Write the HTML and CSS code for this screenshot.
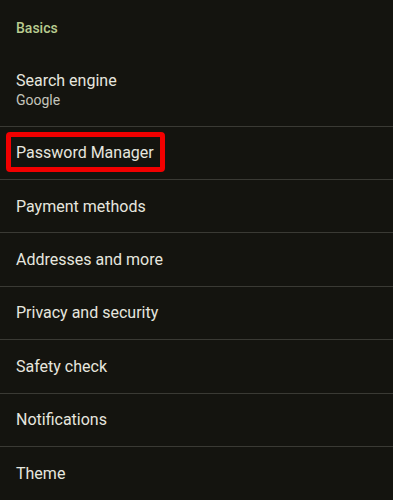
FILE: index.html
```html
<!DOCTYPE html>
<html>
<head>
<meta charset="utf-8">
<link rel="stylesheet" href="styles.css">
</head>
<body>
<div class="settings">
  <div class="section-header">Basics</div>
  <div class="row row-two">
    <div class="title">Search engine</div>
    <div class="subtitle">Google</div>
  </div>
  <div class="row row-divided row-highlight">
    <div class="title">Password Manager</div>
    <div class="highlight-box"></div>
  </div>
  <div class="row row-divided"><div class="title">Payment methods</div></div>
  <div class="row row-divided"><div class="title">Addresses and more</div></div>
  <div class="row row-divided"><div class="title">Privacy and security</div></div>
  <div class="row row-divided"><div class="title">Safety check</div></div>
  <div class="row row-divided"><div class="title">Notifications</div></div>
  <div class="row row-divided"><div class="title">Theme</div></div>
</div>
</body>
</html>
```
FILE: styles.css
```css
html, body {
  margin: 0;
  padding: 0;
  background: #14140f;
}
body {
  font-family: Roboto, "Noto Sans", Arial, sans-serif;
  color: #e4e4dc;
  width: 393px;
  height: 500px;
  overflow: hidden;
}
.settings {
  display: flex;
  flex-direction: column;
}
.section-header {
  height: 52px;
  box-sizing: border-box;
  padding: 18px 16px 0;
  font-size: 14px;
  line-height: 20px;
  font-weight: 500;
  color: #b9cc8f;
}
.row {
  display: flex;
  flex-direction: column;
  justify-content: center;
  padding: 1px 16px 0;
  box-sizing: border-box;
  height: 53.4px;
  flex-shrink: 0;
}
.row-two {
  height: 73.6px;
  padding-top: 4px;
}
.row-divided {
  border-top: 1.5px solid #3a3a34;
}
.row-highlight {
  position: relative;
}
.title {
  font-size: 16px;
  line-height: 20px;
  color: #e6e6df;
}
.subtitle {
  font-size: 14px;
  line-height: 19px;
  color: #c4c4bb;
}
.highlight-box {
  position: absolute;
  left: 6px;
  top: 5px;
  width: 159px;
  height: 40.5px;
  box-sizing: border-box;
  border: 5px solid #f20000;
  border-radius: 4px;
}
```
